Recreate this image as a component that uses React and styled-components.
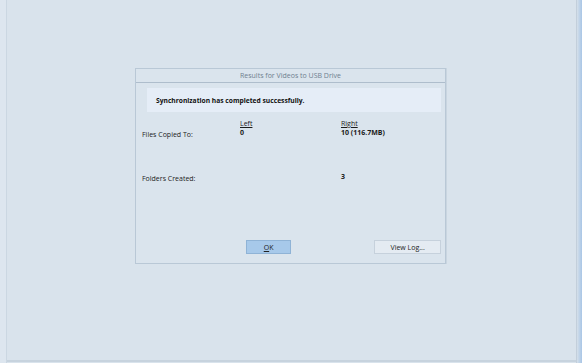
import styled, { createGlobalStyle } from "styled-components";

const Global = createGlobalStyle`
  html, body { margin: 0; padding: 0; }
  body {
    background: #d9e3ec;
    font-family: "Open Sans", "DejaVu Sans", sans-serif;
    color: #1b1b1b;
  }
`;

const Screen = styled.div`
  width: 582px;
  height: 363px;
  display: flex;
  background: #d9e3ec;
  overflow: hidden;
`;

const LeftEdge = styled.div`
  width: 6px;
  border-right: 1px solid #cbd7e2;
  background: #dde6ef;
`;

const Main = styled.div`
  flex: 1;
  display: flex;
  flex-direction: column;
  border-bottom: 2px solid #c7d3de;
  margin-bottom: 1px;
`;

const Stage = styled.div`
  flex: 1;
  padding-top: 68px;
  padding-left: 128px;
`;

const RightEdge = styled.div`
  width: 5px;
  border-left: 1px solid #c3cfdb;
  background: linear-gradient(to right, #d5e0ea, #a9c6e6);
`;

const Dialog = styled.div`
  width: 309px;
  height: 194px;
  background: #dae4ed;
  border: 1px solid #b9c8d6;
  box-shadow: 1px 0 0 #c9d5e0;
  display: flex;
  flex-direction: column;
`;

const TitleBar = styled.div`
  height: 13px;
  border-bottom: 1px solid #aebdcc;
  display: flex;
  align-items: center;
  justify-content: center;
  font-size: 7px;
  color: #6f7f8f;
`;

const Body = styled.div`
  flex: 1;
  display: flex;
  flex-direction: column;
  padding: 5px 4px 9px 6px;
`;

const Message = styled.div`
  margin-left: 5px;
  height: 24px;
  background: #e5edf7;
  display: flex;
  align-items: center;
  padding-left: 9px;
  font-size: 6.7px;
  font-weight: bold;
  color: #111;
`;

const Results = styled.div`
  display: grid;
  grid-template-columns: 98px 101px 1fr;
  grid-template-rows: 9px 9px 50px;
  margin-top: 7px;
  font-size: 7px;
  flex: 1;
`;

const Label = styled.div`
  grid-column: 1;
  grid-row: ${(p) => p.$row};
  align-self: ${(p) => p.$align || "start"};
  padding-top: ${(p) => p.$pt || 0}px;
  margin-bottom: ${(p) => p.$mb || 0}px;
`;

const Head = styled.div`
  text-decoration: underline;
  align-self: end;
`;

const Value = styled.div`
  font-weight: bold;
  padding-top: ${(p) => p.$pt || 0}px;
`;

const Buttons = styled.div`
  display: flex;
  align-items: center;
  padding-left: 104px;
`;

const Button = styled.button`
  height: 14px;
  width: ${(p) => p.$w}px;
  margin-left: ${(p) => p.$ml || 0}px;
  padding: 0;
  font-family: inherit;
  font-size: 7px;
  color: #222;
  background: ${(p) => (p.$primary ? "#a7c9ea" : "#e4ebf2")};
  border: 1px solid ${(p) => (p.$primary ? "#8fb3d6" : "#c6d1dc")};
  u { text-decoration: underline; }
`;

export default function App() {
  return (
    <Screen>
      <Global />
      <LeftEdge />
      <Main>
        <Stage>
          <Dialog>
            <TitleBar>Results for Videos to USB Drive</TitleBar>
            <Body>
              <Message>Synchronization has completed successfully.</Message>
              <Results>
                <Label $row="1 / span 2" $align="end" $mb={-2}>Files Copied To:</Label>
                <Head>Left</Head>
                <Head>Right</Head>
                <Value>0</Value>
                <Value>10 (116.7MB)</Value>
                <Label $row={3} $pt={37}>Folders Created:</Label>
                <Value $pt={35}></Value>
                <Value $pt={35}>3</Value>
              </Results>
              <Buttons>
                <Button $primary $w={46}><u>O</u>K</Button>
                <Button $w={68} $ml={83}>View Log...</Button>
              </Buttons>
            </Body>
          </Dialog>
        </Stage>
      </Main>
      <RightEdge />
    </Screen>
  );
}
